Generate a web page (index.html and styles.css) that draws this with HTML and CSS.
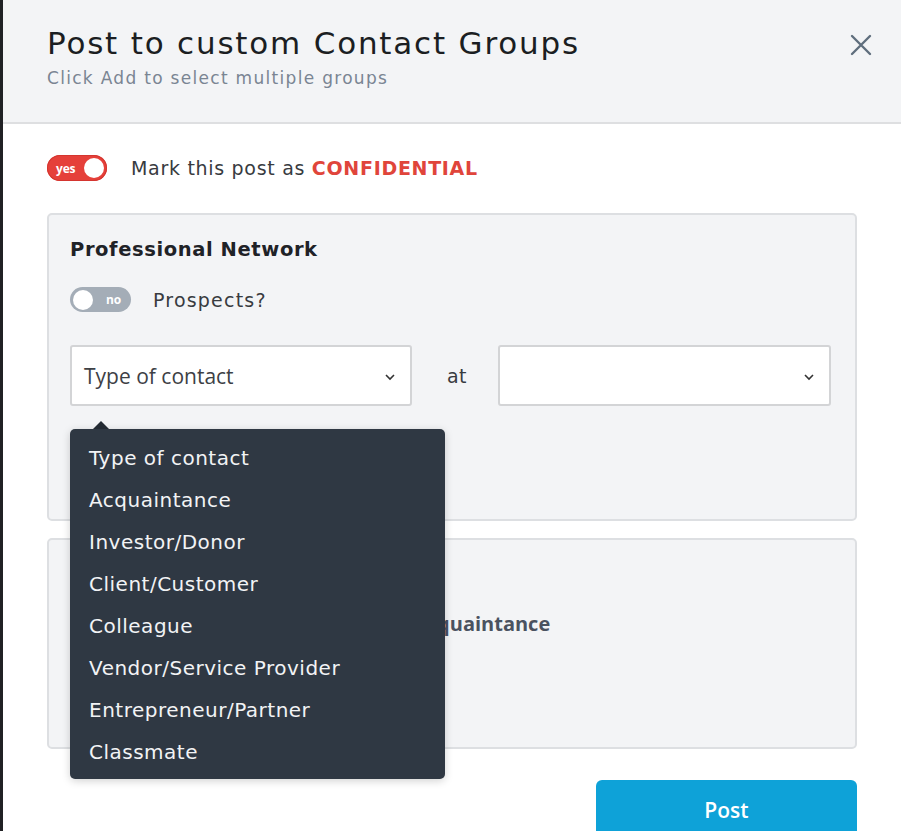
FILE: index.html
```html
<!DOCTYPE html>
<html>
<head>
<meta charset="utf-8">
<link rel="stylesheet" href="styles.css">
</head>
<body>
<div class="screen">
  <div class="backdrop"></div>
  <div class="modal">
    <div class="modal-header">
      <div class="titles">
        <h1 class="title">Post to custom Contact Groups</h1>
        <p class="subtitle">Click Add to select multiple groups</p>
      </div>
      <button class="close" aria-label="Close">
        <svg width="24" height="24" viewBox="0 0 24 24"><path d="M3 3 L21 21 M21 3 L3 21" stroke="#5f6e7d" stroke-width="2.4" stroke-linecap="round" fill="none"/></svg>
      </button>
    </div>
    <div class="modal-body">
      <div class="confidential-row">
        <span class="toggle toggle-on"><span class="toggle-label">yes</span><span class="knob"></span></span>
        <span class="confidential-text">Mark this post as <strong class="red">CONFIDENTIAL</strong></span>
      </div>

      <div class="card card-1">
        <h2 class="card-title">Professional Network</h2>
        <div class="prospect-row">
          <span class="toggle toggle-off"><span class="knob"></span><span class="toggle-label">no</span></span>
          <span class="prospect-text">Prospects?</span>
        </div>
        <div class="select-row">
          <div class="select-wrap">
            <div class="select select-type">
              <span class="select-text">Type of contact</span>
              <svg class="chev" width="12" height="8" viewBox="0 0 12 8"><polyline points="2,2 6,6 10,2" fill="none" stroke="#333" stroke-width="1.6"/></svg>
            </div>
            <div class="dropdown">
              <span class="dropdown-arrow"></span>
              <ul class="dropdown-list">
                <li>Type of contact</li>
                <li>Acquaintance</li>
                <li>Investor/Donor</li>
                <li>Client/Customer</li>
                <li>Colleague</li>
                <li>Vendor/Service Provider</li>
                <li>Entrepreneur/Partner</li>
                <li>Classmate</li>
              </ul>
            </div>
          </div>
          <span class="at">at</span>
          <div class="select select-at">
            <span class="select-text"></span>
            <svg class="chev" width="12" height="8" viewBox="0 0 12 8"><polyline points="2,2 6,6 10,2" fill="none" stroke="#333" stroke-width="1.6"/></svg>
          </div>
        </div>
      </div>

      <div class="card card-2">
        <div class="card2-label">Acquaintance</div>
      </div>

      <div class="actions">
        <button class="post-btn">Post</button>
      </div>
    </div>
  </div>
</div>
</body>
</html>
```

FILE: styles.css
```css
* { box-sizing: border-box; }
html, body { margin: 0; padding: 0; }
body {
  width: 901px;
  height: 831px;
  overflow: hidden;
  font-family: "DejaVu Sans", "Noto Sans", sans-serif;
  background: #1c1c1c;
}
.screen {
  display: flex;
  height: 831px;
}
.backdrop {
  width: 3px;
  flex: none;
  background: #202124;
}
.modal {
  flex: 1;
  background: #ffffff;
  display: flex;
  flex-direction: column;
}
.modal-header {
  flex: none;
  height: 124px;
  background: #f3f4f6;
  border-bottom: 2px solid #dedfe1;
  display: flex;
  justify-content: space-between;
  padding: 24px 28px 0 44px;
}
.title {
  margin: 0;
  font-size: 31px;
  line-height: 38px;
  font-weight: 500;
  color: #1b1e22;
  letter-spacing: 1.8px;
}
.subtitle {
  margin: 5px 0 0;
  font-size: 17px;
  line-height: 22px;
  color: #7a8593;
  font-weight: 400;
  letter-spacing: 1.3px;
}
.close {
  border: 0;
  background: transparent;
  padding: 0;
  margin-top: 9px;
  width: 24px;
  height: 24px;
  cursor: pointer;
}
.modal-body {
  flex: none;
  padding: 31px 44px 0 44px;
  display: flex;
  flex-direction: column;
}
.confidential-row {
  display: flex;
  align-items: center;
  height: 26px;
}
.toggle {
  display: inline-flex;
  align-items: center;
  border-radius: 14px;
  flex: none;
}
.toggle-on {
  width: 60px;
  height: 26px;
  background: #e5403a;
  padding: 0 3px 0 9px;
  justify-content: space-between;
  box-shadow: inset 0 0 0 1px #d4352f;
}
.toggle-off {
  width: 61px;
  height: 25px;
  background: #a4adb7;
  padding: 0 10px 0 3px;
  justify-content: space-between;
}
.knob {
  width: 20px;
  height: 20px;
  border-radius: 50%;
  background: #ffffff;
}
.toggle-label {
  color: #ffffff;
  font-weight: 700;
  font-size: 12px;
  font-family: "Open Sans", sans-serif;
  letter-spacing: -0.2px;
}
.confidential-text {
  margin-left: 24px;
  font-size: 19px;
  color: #383b3f;
  letter-spacing: 0.7px;
}
.red {
  color: #e0453b;
  font-weight: 700;
}
.card {
  background: #f3f4f6;
  border: 2px solid #dddfe2;
  border-radius: 5px;
}
.card-1 {
  margin-top: 32px;
  height: 308px;
  padding: 23px 21px 0 21px;
}
.card-title {
  margin: 0;
  font-size: 19.5px;
  line-height: 24px;
  font-weight: 700;
  color: #1f2227;
  letter-spacing: 0.6px;
}
.prospect-row {
  margin-top: 25px;
  display: flex;
  align-items: center;
  height: 25px;
}
.prospect-text {
  margin-left: 22px;
  font-size: 19px;
  color: #383b3f;
  letter-spacing: 1.2px;
}
.select-row {
  margin-top: 33px;
  display: flex;
  align-items: center;
}
.select-wrap {
  position: relative;
}
.select {
  height: 61px;
  background: #ffffff;
  border: 2px solid #d3d4d6;
  border-radius: 3px;
  display: flex;
  align-items: center;
  justify-content: space-between;
  padding: 0 14px 0 12px;
}
.select-type { width: 342px; }
.select-at { width: 333px; }
.select-text {
  font-family: "Open Sans", sans-serif;
  font-size: 21px;
  color: #3d4045;
}
.chev { display: block; margin-top: 2px; }
.at {
  width: 86px;
  text-align: center;
  font-size: 19px;
  color: #383b3f;
  padding-left: 4px;
  letter-spacing: 0.5px;
}
.dropdown {
  position: absolute;
  left: 0;
  top: 84px;
  width: 375px;
  background: #2f3843;
  border-radius: 5px;
  box-shadow: 0 2px 8px rgba(0,0,0,0.18);
  z-index: 10;
}
.dropdown-arrow {
  position: absolute;
  top: -8px;
  left: 23px;
  width: 0;
  height: 0;
  border-left: 8px solid transparent;
  border-right: 8px solid transparent;
  border-bottom: 8px solid #232a33;
}
.dropdown-list {
  list-style: none;
  margin: 0;
  padding: 8px 0 6px 0;
}
.dropdown-list li {
  height: 42px;
  line-height: 42px;
  padding-left: 19px;
  font-size: 20px;
  color: #f2f3f5;
  letter-spacing: 0.5px;
}
.card-2 {
  margin-top: 17px;
  height: 211px;
  padding: 72px 0 0 364px;
}
.card2-label {
  font-family: "Open Sans", sans-serif;
  font-weight: 700;
  font-size: 20px;
  color: #4a5260;
  line-height: 24px;
}
.actions {
  margin-top: 31px;
  display: flex;
  justify-content: flex-end;
}
.post-btn {
  width: 261px;
  height: 60px;
  border: 0;
  border-radius: 6px;
  background: #0ea2d8;
  color: #ffffff;
  font-family: "Open Sans", sans-serif;
  font-weight: 600;
  font-size: 21px;
  padding: 0;
}
```
